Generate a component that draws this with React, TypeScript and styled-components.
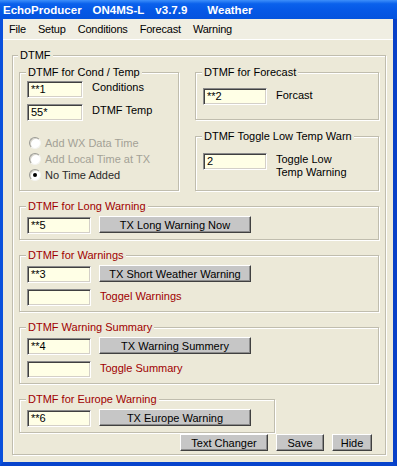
import React from "react";
import styled, { createGlobalStyle } from "styled-components";

const GlobalStyle = createGlobalStyle`
  html, body {
    margin: 0;
    padding: 0;
    background: #ffffff;
  }
  body {
    font-family: "Liberation Sans", Arial, sans-serif;
    font-size: 11px;
    color: #000;
  }
  * {
    box-sizing: border-box;
  }
`;

const RED = "#a00000";
const FACE = "#ece9d8";

const Window = styled.div`
  width: 397px;
  height: 466px;
  display: flex;
  flex-direction: column;
  background: #0a4bd4;
`;

const TitleBar = styled.div`
  height: 19px;
  flex: none;
  display: flex;
  align-items: center;
  padding-left: 3px;
  background: linear-gradient(
    to bottom,
    #3d8ffa 0%,
    #0a61ec 20%,
    #0558e6 55%,
    #0453de 100%
  );
  color: #fff;
  font-weight: bold;
  font-size: 11.5px;
  white-space: nowrap;
`;

const TitlePart = styled.span<{ $gap?: number }>`
  margin-left: ${(p) => p.$gap ?? 0}px;
`;

const Frame = styled.div`
  flex: 1;
  display: flex;
  flex-direction: column;
  background: ${FACE};
  border-left: 3px solid #0a50dc;
  border-right: 4px solid #0840c8;
  border-bottom: 4px solid #0844cc;
`;

const MenuBar = styled.div`
  height: 21px;
  display: flex;
  align-items: center;
  padding-left: 0px;
  background: #f0eee2;
  border-bottom: 1px solid #fff;
`;

const MenuItem = styled.span`
  padding: 0 6px;
  font-size: 11px;
  letter-spacing: -0.2px;
`;

const Content = styled.div`
  flex: 1;
  padding: 15px 7px 7px 9px;
  display: flex;
  flex-direction: column;
`;

const GroupBox = styled.div<{ $w?: number; $mt?: number; $pb?: number; $px?: number; $grow?: boolean }>`
  display: flex;
  flex-direction: column;
  border: 1px solid #c0bdae;
  box-shadow: inset 1px 1px #fff, 1px 1px #fff;
  padding: 0 ${(p) => p.$px ?? 7}px ${(p) => p.$pb ?? 5}px;
  margin-top: ${(p) => p.$mt ?? 0}px;
  width: ${(p) => (p.$w ? `${p.$w}px` : "auto")};
  flex: ${(p) => (p.$grow ? 1 : "none")};
`;

const Caption = styled.div<{ $red?: boolean; $mb?: number }>`
  align-self: flex-start;
  margin: -7px 0 ${(p) => p.$mb ?? 3}px -1px;
  padding: 0 2px;
  line-height: 13px;
  background: ${FACE};
  color: ${(p) => (p.$red ? RED : "#000")};
  white-space: nowrap;
`;

const TopRow = styled.div`
  display: flex;
  gap: 16px;
  margin-top: 10px;
`;

const RightCol = styled.div`
  width: 184px;
  display: flex;
  flex-direction: column;
`;

const Row = styled.div<{ $mt?: number }>`
  display: flex;
  align-items: flex-start;
  gap: 8px;
  margin-top: ${(p) => p.$mt ?? 0}px;
`;

const Field = styled.div<{ $w?: number; $mt?: number }>`
  width: ${(p) => p.$w ?? 64}px;
  height: 17px;
  flex: none;
  margin-top: ${(p) => p.$mt ?? 0}px;
  background: #ffffe6;
  border: 1px solid;
  border-color: #8a8a8a #fff #fff #8a8a8a;
  box-shadow: inset 1px 1px #404040, inset -1px -1px #d4d0c8;
  padding-left: 3px;
  line-height: 15px;
  font-size: 11px;
  white-space: nowrap;
`;

const FieldLabel = styled.div<{ $red?: boolean; $mt?: number }>`
  margin-top: ${(p) => p.$mt ?? 0}px;
  padding-left: 1px;
  line-height: 13px;
  color: ${(p) => (p.$red ? RED : "#000")};
`;

const RadioList = styled.div`
  margin-top: 14px;
  display: flex;
  flex-direction: column;
`;

const RadioRow = styled.div<{ $enabled?: boolean }>`
  height: 16px;
  display: flex;
  align-items: center;
  gap: 4px;
  padding-left: 2px;
  color: ${(p) => (p.$enabled ? "#2a2a2a" : "#a3a196")};
`;

const RadioDot = styled.span<{ $checked?: boolean }>`
  position: relative;
  width: 12px;
  height: 12px;
  border-radius: 50%;
  background: #fff;
  border: 1px solid;
  border-color: #9a9a94 #f4f4f0 #f4f4f0 #9a9a94;
  box-shadow: inset 1px 1px #d8d6cc;

  &::after {
    content: "";
    display: ${(p) => (p.$checked ? "block" : "none")};
    position: absolute;
    left: 3px;
    top: 3px;
    width: 4px;
    height: 4px;
    border-radius: 50%;
    background: #000;
  }
`;

const TxButton = styled.button<{ $w: number }>`
  width: ${(p) => p.$w}px;
  height: 17px;
  flex: none;
  padding: 0;
  margin: 0;
  font-family: "Liberation Sans", Arial, sans-serif;
  font-size: 11px;
  line-height: 14px;
  color: #000;
  background: #c6c6c6;
  border: 1px solid;
  border-color: #fff #404040 #404040 #fff;
  box-shadow: inset -1px -1px #8c8c8c;
  white-space: nowrap;
`;

const ButtonBar = styled.div`
  display: flex;
  justify-content: flex-end;
  gap: 8px;
  margin-top: 1px;
  padding-right: 7px;
`;

const App = () => {
  return (
    <>
      <GlobalStyle />
      <Window>
        <TitleBar>
          <TitlePart>EchoProducer</TitlePart>
          <TitlePart $gap={11}>ON4MS-L</TitlePart>
          <TitlePart $gap={11}>v3.7.9</TitlePart>
          <TitlePart $gap={20}>Weather</TitlePart>
        </TitleBar>
        <Frame>
          <MenuBar>
            <MenuItem>File</MenuItem>
            <MenuItem>Setup</MenuItem>
            <MenuItem>Conditions</MenuItem>
            <MenuItem>Forecast</MenuItem>
            <MenuItem>Warning</MenuItem>
          </MenuBar>
          <Content>
            <GroupBox $px={6} $pb={3}>
              <Caption $mb={0}>DTMF</Caption>

              <TopRow>
                <GroupBox $w={160} $pb={7}>
                  <Caption $mb={2}>DTMF for Cond / Temp</Caption>
                  <Row>
                    <Field $w={56}>**1</Field>
                    <FieldLabel>Conditions</FieldLabel>
                  </Row>
                  <Row $mt={6}>
                    <Field $w={56}>55*</Field>
                    <FieldLabel>DTMF Temp</FieldLabel>
                  </Row>
                  <RadioList>
                    <RadioRow>
                      <RadioDot />
                      Add WX Data Time
                    </RadioRow>
                    <RadioRow>
                      <RadioDot />
                      Add Local Time at TX
                    </RadioRow>
                    <RadioRow $enabled>
                      <RadioDot $checked />
                      No Time Added
                    </RadioRow>
                  </RadioList>
                </GroupBox>

                <RightCol>
                  <GroupBox $pb={14}>
                    <Caption $mb={9}>DTMF for Forecast</Caption>
                    <Row>
                      <Field>**2</Field>
                      <FieldLabel $mt={1}>Forcast</FieldLabel>
                    </Row>
                  </GroupBox>
                  <GroupBox $mt={16} $grow>
                    <Caption $mb={10}>DTMF Toggle Low Temp Warn</Caption>
                    <Row>
                      <Field>2</Field>
                      <FieldLabel $mt={0}>
                        Toggle Low
                        <br />
                        Temp Warning
                      </FieldLabel>
                    </Row>
                  </GroupBox>
                </RightCol>
              </TopRow>

              <GroupBox $mt={15}>
                <Caption $red>DTMF for Long Warning</Caption>
                <Row>
                  <Field $mt={1}>**5</Field>
                  <TxButton $w={152}>TX Long Warning Now</TxButton>
                </Row>
              </GroupBox>

              <GroupBox $mt={15}>
                <Caption $red>DTMF for Warnings</Caption>
                <Row>
                  <Field $mt={1}>**3</Field>
                  <TxButton $w={152}>TX Short Weather Warning</TxButton>
                </Row>
                <Row $mt={6}>
                  <Field />
                  <FieldLabel $red $mt={1}>
                    Toggel Warnings
                  </FieldLabel>
                </Row>
              </GroupBox>

              <GroupBox $mt={15}>
                <Caption $red>DTMF Warning Summary</Caption>
                <Row>
                  <Field $mt={1}>**4</Field>
                  <TxButton $w={152}>TX Warning Summery</TxButton>
                </Row>
                <Row $mt={6}>
                  <Field />
                  <FieldLabel $red $mt={1}>
                    Toggle Summary
                  </FieldLabel>
                </Row>
              </GroupBox>

              <GroupBox $mt={15} $w={256}>
                <Caption $red>DTMF for Europe Warning</Caption>
                <Row>
                  <Field $mt={1}>**6</Field>
                  <TxButton $w={152}>TX Europe Warning</TxButton>
                </Row>
              </GroupBox>

              <ButtonBar>
                <TxButton $w={88}>Text Changer</TxButton>
                <TxButton $w={48}>Save</TxButton>
                <TxButton $w={40}>Hide</TxButton>
              </ButtonBar>
            </GroupBox>
          </Content>
        </Frame>
      </Window>
    </>
  );
};

export default App;
